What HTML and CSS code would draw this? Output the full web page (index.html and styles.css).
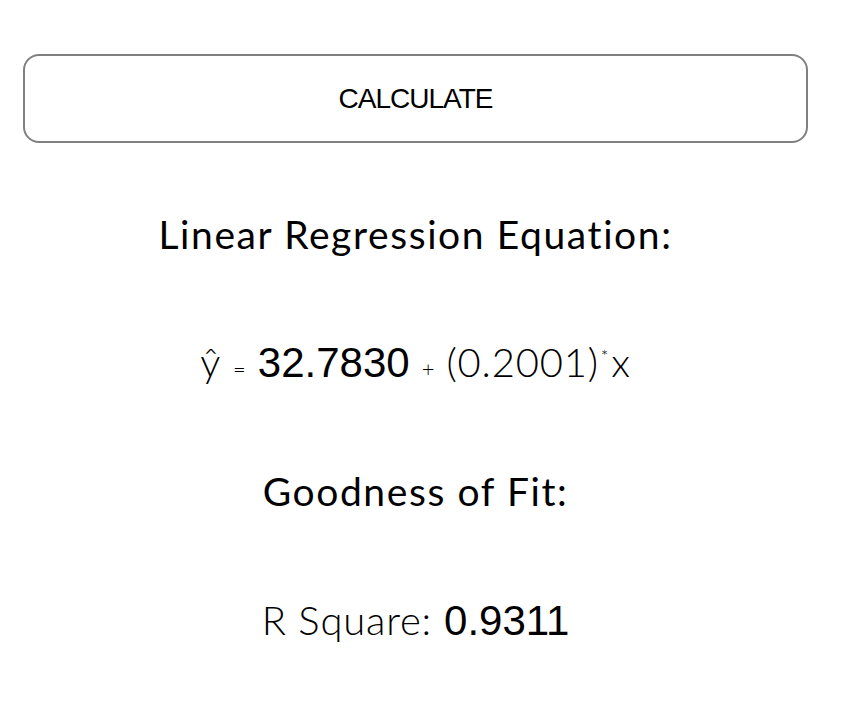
FILE: index.html
```html
<!DOCTYPE html>
<html lang="en">
<head>
  <meta charset="UTF-8" />
  <title>Linear Regression</title>
  <link rel="stylesheet" href="styles.css">
</head>
<body>
  <main class="calc">
    <button class="calc-btn" type="button">CALCULATE</button>

    <!-- Results -->
    <section class="results">
      <h2 class="result-title">Linear Regression Equation:</h2>
      <p class="result-line equation">
        <span class="sym">ŷ</span>
        <span class="op">=</span>
        <span class="num">32.7830</span>
        <span class="op">+</span>
        <span class="sym">(0.2001)<sup>*</sup>x</span>
      </p>
      <h2 class="result-title">Goodness of Fit:</h2>
      <p class="result-line r-square">
        <span class="sym">R Square:</span>
        <span class="num">0.9311</span>
      </p>
    </section>
  </main>
</body>
</html>
```

FILE: styles.css
```css
* {
  margin: 0;
  padding: 0;
  box-sizing: border-box;
}
body {
  background: #fff;
  color: #000;
  font-family: 'Lato', 'Liberation Sans', sans-serif;
}
.calc {
  padding: 54px 37px 0 23px;
}
.calc-btn {
  display: block;
  width: 100%;
  height: 89px;
  background: #fff;
  border: 2px solid #808080;
  border-radius: 16px;
  font-family: 'Liberation Sans', Arial, sans-serif;
  font-size: 28px;
  letter-spacing: -1px;
  color: #000;
  cursor: pointer;
}
.results {
  display: flex;
  flex-direction: column;
  align-items: center;
}
.result-title {
  margin-top: 68px;
  font-size: 39px;
  font-weight: 400;
  letter-spacing: 1.6px;
  line-height: 46px;
}
.result-line {
  display: flex;
  align-items: baseline;
  gap: 12px;
  font-size: 40px;
  line-height: 46px;
}
.equation {
  margin-top: 76px;
}
.equation + .result-title {
  margin-top: 76px;
}
.r-square {
  margin-top: 83px;
}
.sym {
  font-weight: 300;
  letter-spacing: 0.8px;
}
.sym sup {
  font-size: 18px;
  vertical-align: 14px;
  margin: 0 2px;
}
.op {
  font-size: 22px;
  font-weight: 300;
}
.num {
  font-family: 'Liberation Sans', Arial, sans-serif;
  font-size: 42px;
}
```
